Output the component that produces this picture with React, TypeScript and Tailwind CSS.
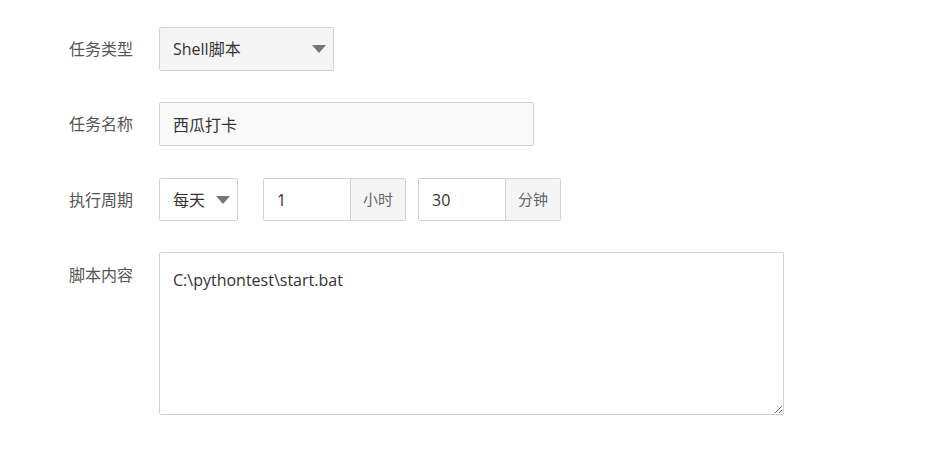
import React from 'react';

const font = { fontFamily: '"Open Sans", "Noto Sans CJK SC", sans-serif' };

const Caret: React.FC = () => (
    <svg width="14" height="8" viewBox="0 0 14 8" className="shrink-0">
        <path d="M0 0 L14 0 L7 8 Z" fill="#767676" />
    </svg>
);

const Label: React.FC<{ text: string; className?: string }> = ({ text, className = '' }) => (
    <div className={`w-[90px] shrink-0 text-[16px] text-[#555] ${className}`}>{text}</div>
);

const UnitInput: React.FC<{ value: string; unit: string }> = ({ value, unit }) => (
    <div className="flex h-[43px] rounded-[2px] border border-[#d2d2d2]">
        <input
            defaultValue={value}
            className="w-[86px] bg-white pl-[13px] text-[16px] text-[#333] outline-none"
            style={font}
        />
        <div className="flex w-[55px] items-center justify-center border-l border-[#d2d2d2] bg-[#f5f5f5] text-[15px] text-[#666]">
            {unit}
        </div>
    </div>
);

export default function App() {
    return (
        <div className="min-h-[451px] w-[929px] bg-white pl-[69px] pt-[27px]" style={font}>
            {/* 任务类型 */}
            <div className="flex items-center">
                <Label text="任务类型" />
                <div className="flex h-[44px] w-[175px] items-center justify-between rounded-[2px] border border-[#d2d2d2] bg-[#f5f5f5] pl-[13px] pr-[7px] text-[16px] text-[#333]">
                    <span>Shell脚本</span>
                    <Caret />
                </div>
            </div>

            {/* 任务名称 */}
            <div className="mt-[31px] flex items-center">
                <Label text="任务名称" />
                <input
                    defaultValue="西瓜打卡"
                    className="h-[44px] w-[375px] rounded-[2px] border border-[#d2d2d2] bg-[#f9f9f9] pl-[13px] text-[16px] text-[#333] outline-none"
                    style={font}
                />
            </div>

            {/* 执行周期 */}
            <div className="mt-[32px] flex items-center">
                <Label text="执行周期" />
                <div className="flex h-[43px] w-[79px] items-center justify-between rounded-[2px] border border-[#d2d2d2] bg-white pl-[13px] pr-[7px] text-[16px] text-[#333]">
                    <span>每天</span>
                    <Caret />
                </div>
                <div className="ml-[25px]">
                    <UnitInput value="1" unit="小时" />
                </div>
                <div className="ml-[12px]">
                    <UnitInput value="30" unit="分钟" />
                </div>
            </div>

            {/* 脚本内容 */}
            <div className="mt-[31px] flex items-start">
                <Label text="脚本内容" className="pt-[11px]" />
                <textarea
                    defaultValue={'C:\\pythontest\\start.bat'}
                    className="h-[163px] w-[625px] rounded-[2px] border border-[#d2d2d2] bg-white px-[13px] pt-[16px] text-[16px] leading-[22px] text-[#333] outline-none"
                    style={font}
                />
            </div>
        </div>
    );
}
